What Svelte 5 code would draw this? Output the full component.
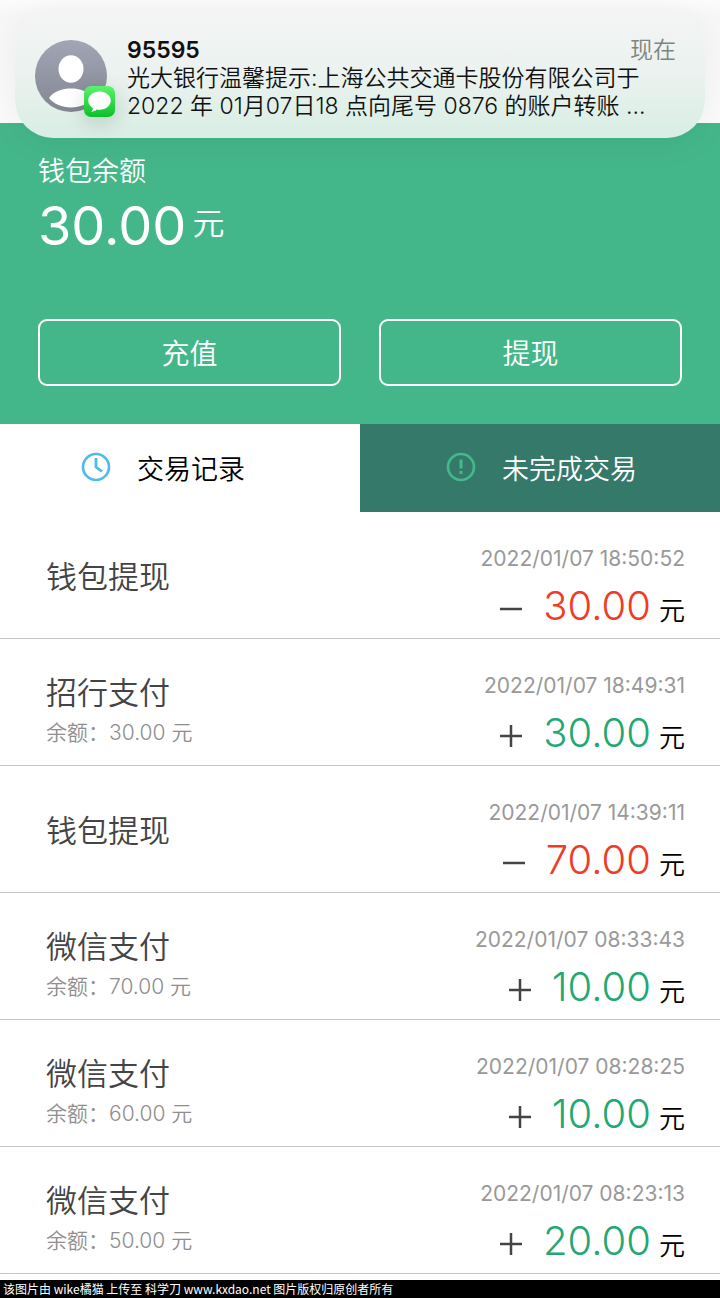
<script lang="ts">
  type Record = {
    title: string;
    time: string;
    sign: "+" | "−";
    amount: string;
    balance?: string;
  };

  const records: Record[] = [
    { title: "钱包提现", time: "2022/01/07 18:50:52", sign: "−", amount: "30.00" },
    { title: "招行支付", time: "2022/01/07 18:49:31", sign: "+", amount: "30.00", balance: "30.00" },
    { title: "钱包提现", time: "2022/01/07 14:39:11", sign: "−", amount: "70.00" },
    { title: "微信支付", time: "2022/01/07 08:33:43", sign: "+", amount: "10.00", balance: "70.00" },
    { title: "微信支付", time: "2022/01/07 08:28:25", sign: "+", amount: "10.00", balance: "60.00" },
    { title: "微信支付", time: "2022/01/07 08:23:13", sign: "+", amount: "20.00", balance: "50.00" },
  ];

  let tab = $state<"done" | "pending">("done");
</script>

<div class="page">
  <aside class="banner">
    <div class="avatar">
      <svg class="person" viewBox="0 0 72 72" aria-hidden="true">
        <defs>
          <linearGradient id="grey" x1="0" y1="0" x2="0" y2="1">
            <stop offset="0" stop-color="#a2a5b4" />
            <stop offset="1" stop-color="#838692" />
          </linearGradient>
        </defs>
        <circle cx="36" cy="36" r="36" fill="url(#grey)" />
        <ellipse cx="36" cy="29" rx="12.5" ry="13.7" fill="#fff" />
        <path d="M14 58C19 51 27 48.500 36 48.500S53 51 58 58C53 64 45 67.500 36 67.500S19 64 14 58Z" fill="#fff" />
      </svg>
      <svg class="bubble" viewBox="0 0 31 31" aria-hidden="true">
        <defs>
          <linearGradient id="green" x1="0" y1="0" x2="0" y2="1">
            <stop offset="0" stop-color="#5df36c" />
            <stop offset="1" stop-color="#0bc02a" />
          </linearGradient>
        </defs>
        <rect width="31" height="31" rx="7" fill="url(#green)" />
        <path d="M15.500 5.500C9.200 5.500 4.200 9.500 4.200 14.600C4.200 17.700 6 20.300 8.900 22C8.900 23.400 8.200 24.700 7.200 25.800C9.500 25.600 11.300 24.800 12.600 23.500C13.500 23.700 14.500 23.800 15.500 23.800C21.800 23.800 26.800 19.700 26.800 14.600S21.800 5.500 15.500 5.500Z" fill="#fff" />
      </svg>
    </div>
    <div class="message">
      <div class="sender"><strong>95595</strong><time>现在</time></div>
      <p>光大银行温馨提示:上海公共交通卡股份有限公司于<br />2022 年 01月07日18 点向尾号 0876 的账户转账 ...</p>
    </div>
  </aside>

  <div class="topbar"></div>

  <section class="wallet">
    <h1>钱包余额</h1>
    <p class="total">30.00<span>元</span></p>
    <div class="actions">
      <button type="button">充值</button>
      <button type="button">提现</button>
    </div>
  </section>

  <nav class="tabs">
    <button type="button" class:active={tab === "done"} onclick={() => (tab = "done")}>
      <svg viewBox="0 0 30 30" fill="none" stroke="#4fb9ee" aria-hidden="true">
        <circle cx="15" cy="15" r="13" stroke-width="2.600" />
        <path d="M15 6V15L21 19.500" stroke-width="2.800" />
      </svg>
      交易记录
    </button>
    <button type="button" class:active={tab === "pending"} onclick={() => (tab = "pending")}>
      <svg viewBox="0 0 30 30" fill="none" stroke="#44b98b" aria-hidden="true">
        <circle cx="15" cy="15" r="13" stroke-width="2.600" />
        <path d="M15 7.500V16.500M15 19V22" stroke-width="3" />
      </svg>
      未完成交易
    </button>
  </nav>

  <ul class="records">
    {#each records as r}
      <li>
        <div class="name">
          <h2>{r.title}</h2>
          {#if r.balance}
            <p>余额：{r.balance} 元</p>
          {/if}
        </div>
        <div class="detail">
          <time>{r.time}</time>
          <p class="amount">
            <svg viewBox="0 0 22 22" role="img" aria-label={r.sign}>
              <path d={r.sign === "+" ? "M0 11H22M11 0V22" : "M0 11H22"} stroke="#444" stroke-width="2.500" />
            </svg>
            <b class:out={r.sign === "−"}>{r.amount}</b>
            <span>元</span>
          </p>
        </div>
      </li>
    {/each}
  </ul>

  <footer>该图片由 wike橘猫 上传至 科学刀 www.kxdao.net 图片版权归原创者所有</footer>
</div>

<style>
  :global(body) { margin: 0; background: #fff; }
  .page {
    font-family: Inter, "Noto Sans CJK SC", sans-serif;
    font-weight: 350;
    color: #000;
  }
  h1, h2, p, ul { margin: 0; padding: 0; font-weight: inherit; }
  button { font: inherit; color: inherit; cursor: pointer; }

  .banner {
    position: absolute;
    top: 10px;
    left: 15px;
    right: 15px;
    display: flex;
    gap: 20px;
    box-sizing: border-box;
    padding: 26px 29px 18px 20px;
    border-radius: 38px;
    background: linear-gradient(#f4f4f4, #ebf2ef 50%, #d8eee4);
    box-shadow: 0 4px 36px rgba(0, 0, 0, 0.06);
  }
  .avatar { position: relative; flex: none; width: 72px; height: 72px; margin-top: 4px; }
  .person { display: block; width: 72px; height: 72px; }
  .bubble {
    position: absolute;
    right: -8px;
    bottom: -5px;
    width: 31px;
    height: 31px;
    filter: drop-shadow(0 6px 10px rgba(0, 0, 0, 0.15));
  }
  .message { flex: 1; min-width: 0; color: #111; }
  .sender { display: flex; justify-content: space-between; font-size: 23px; line-height: 28px; }
  .sender strong { font-weight: 600; }
  .sender time { color: #7c8581; }
  .message p { font-size: 23px; line-height: 28px; white-space: nowrap; }

  .topbar { height: 123px; background: linear-gradient(#fcfcfc, #f7f7f7 16px, #fbfbfb); }

  .wallet {
    padding: 30px 38px 38px;
    background: #44b78a;
    color: #fff;
  }
  .wallet h1 { font-size: 27px; line-height: 38px; }
  .total { display: flex; font-size: 54px; font-weight: 400; line-height: 70px; }
  .total span { margin-left: 6px; font-size: 32px; font-weight: 350; line-height: 66px; }
  .actions { display: grid; grid-template-columns: 1fr 1fr; gap: 38px; margin-top: 58px; }
  .actions button {
    height: 67px;
    padding: 0 0 2px;
    border: 2px solid #fff;
    border-radius: 9px;
    background: none;
    font-size: 28px;
  }

  .tabs { display: grid; grid-template-columns: 1fr 1fr; height: 88px; }
  .tabs button {
    display: flex;
    align-items: center;
    gap: 26px;
    padding: 0 0 2px 81px;
    border: 0;
    background: #35796b;
    color: #fff;
    font-size: 27px;
  }
  .tabs button + button { padding-left: 86px; }
  .tabs .active { background: #fff; color: #000; }
  .tabs svg { width: 30px; height: 30px; }

  .records { list-style: none; }
  .records li {
    display: flex;
    justify-content: space-between;
    box-sizing: border-box;
    height: 127px;
    padding: 0 35px 0 46px;
    border-bottom: 1px solid #c4c4c4;
  }
  .name { display: flex; flex-direction: column; justify-content: center; padding-top: 4px; }
  .name h2 { font-size: 31px; line-height: 44px; color: #444; }
  .name h2:not(:last-child) { padding-top: 14px; }
  .name p { font-size: 21px; line-height: 36px; color: #8e8e8e; }
  .detail { padding-top: 32px; text-align: right; }
  .detail time { display: block; font-size: 21px; font-weight: 400; line-height: 30px; color: #999; }
  .amount { display: flex; align-items: baseline; justify-content: flex-end; line-height: 64px; }
  .amount svg { width: 22px; height: 22px; margin-right: 21px; }
  .amount b { font-size: 40px; font-weight: inherit; color: #22a873; }
  .amount b.out { color: #f03b25; }
  .amount span { margin-left: 8px; font-size: 26px; }

  footer {
    margin-top: 6px;
    padding-left: 3px;
    background: #000;
    color: #fff;
    font: 12px/18px "Noto Sans CJK SC", sans-serif;
  }
</style>
